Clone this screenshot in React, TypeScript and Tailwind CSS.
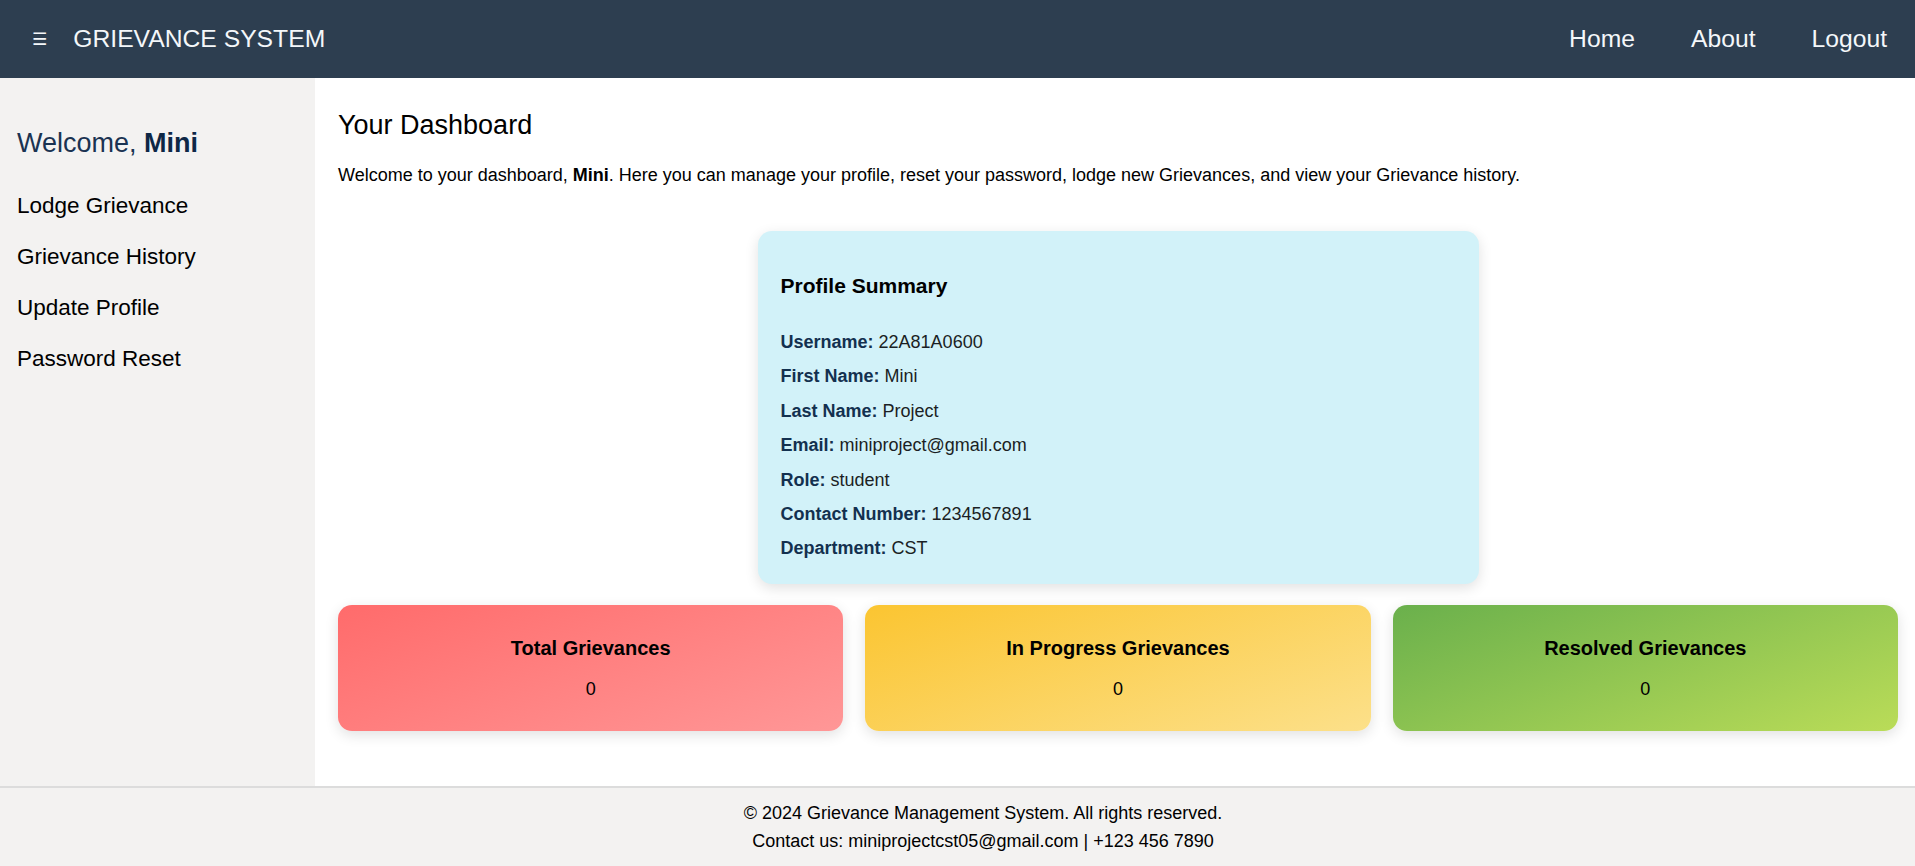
import type { ReactNode } from "react";

const profile: { label: string; value: string }[] = [
  { label: "Username", value: "22A81A0600" },
  { label: "First Name", value: "Mini" },
  { label: "Last Name", value: "Project" },
  { label: "Email", value: "miniproject@gmail.com" },
  { label: "Role", value: "student" },
  { label: "Contact Number", value: "1234567891" },
  { label: "Department", value: "CST" },
];

function StatCard({ title, value, gradient }: { title: string; value: ReactNode; gradient: string }) {
  return (
    <div
      className={`flex h-[126px] flex-1 flex-col items-center rounded-[14px] pt-[31px] text-black shadow-[0_4px_14px_rgba(0,0,0,0.12)] ${gradient}`}
    >
      <h3 className="text-[20px] font-bold leading-[24px]">{title}</h3>
      <p className="mt-[18px] text-[18px] leading-[22px]">{value}</p>
    </div>
  );
}

export default function App() {
  return (
    <div className="flex h-screen flex-col font-['Liberation_Sans',Arial,sans-serif]">
      <header className="flex h-[78px] shrink-0 items-center bg-[#2d3e50] text-[#f4f7fa]">
        <span className="ml-[32px] font-['DejaVu_Sans',sans-serif] text-[17px] leading-none">☰</span>
        <span className="ml-[26px] text-[24.7px]">GRIEVANCE SYSTEM</span>
        <nav className="ml-auto flex text-[24.7px]">
          <a className="px-[28px]">Home</a>
          <a className="px-[28px]">About</a>
          <a className="px-[28px]">Logout</a>
        </nav>
      </header>

      <div className="flex flex-1">
        <aside className="w-[315px] shrink-0 bg-[#f3f2f1] pl-[17px] pt-[48px]">
          <h2 className="text-[27px] leading-[34px] text-[#1a3352]">
            Welcome, <span className="font-bold text-[#0d2746]">Mini</span>
          </h2>
          <ul className="mt-[20px] text-[22.5px] leading-[26px] text-black">
            <li className="py-[12.5px]">Lodge Grievance</li>
            <li className="py-[12.5px]">Grievance History</li>
            <li className="py-[12.5px]">Update Profile</li>
            <li className="py-[12.5px]">Password Reset</li>
          </ul>
        </aside>

        <main className="flex-1 bg-white pl-[23px] pr-[17px] pt-[30px]">
          <h1 className="text-[27px] leading-[34px] text-black">Your Dashboard</h1>
          <p className="mt-[22px] text-[18px] leading-[22px] text-black">
            Welcome to your dashboard, <b>Mini</b>. Here you can manage your profile, reset your password, lodge new
            Grievances, and view your Grievance history.
          </p>

          <div className="mt-[45px] flex justify-center">
            <section className="w-[721px] rounded-[14px] bg-[#d2f2f9] px-[23px] pb-[18px] pt-[43px] shadow-[0_4px_14px_rgba(0,0,0,0.12)]">
              <h3 className="text-[21px] font-bold leading-[24px] text-black">Profile Summary</h3>
              <div className="mt-[27px]">
                {profile.map((p) => (
                  <p key={p.label} className="text-[18px] leading-[34.4px] text-[#1b1f24]">
                    <b className="text-[#13304f]">{p.label}:</b> {p.value}
                  </p>
                ))}
              </div>
            </section>
          </div>

          <div className="mt-[21px] flex gap-[22px]">
            <StatCard title="Total Grievances" value="0" gradient="bg-[linear-gradient(160deg,#ff6b6b,#ff9797)]" />
            <StatCard
              title="In Progress Grievances"
              value="0"
              gradient="bg-[linear-gradient(160deg,#fbc531,#fce08a)]"
            />
            <StatCard title="Resolved Grievances" value="0" gradient="bg-[linear-gradient(160deg,#6ab04c,#badc58)]" />
          </div>
        </main>
      </div>

      <footer className="h-[80px] shrink-0 border-t-2 border-[#dcdcdc] bg-[#f3f2f1] pl-[51px] pt-[11px] text-center text-[18px] leading-[28px] text-black">
        <p>© 2024 Grievance Management System. All rights reserved.</p>
        <p>Contact us: miniprojectcst05@gmail.com | +123 456 7890</p>
      </footer>
    </div>
  );
}
